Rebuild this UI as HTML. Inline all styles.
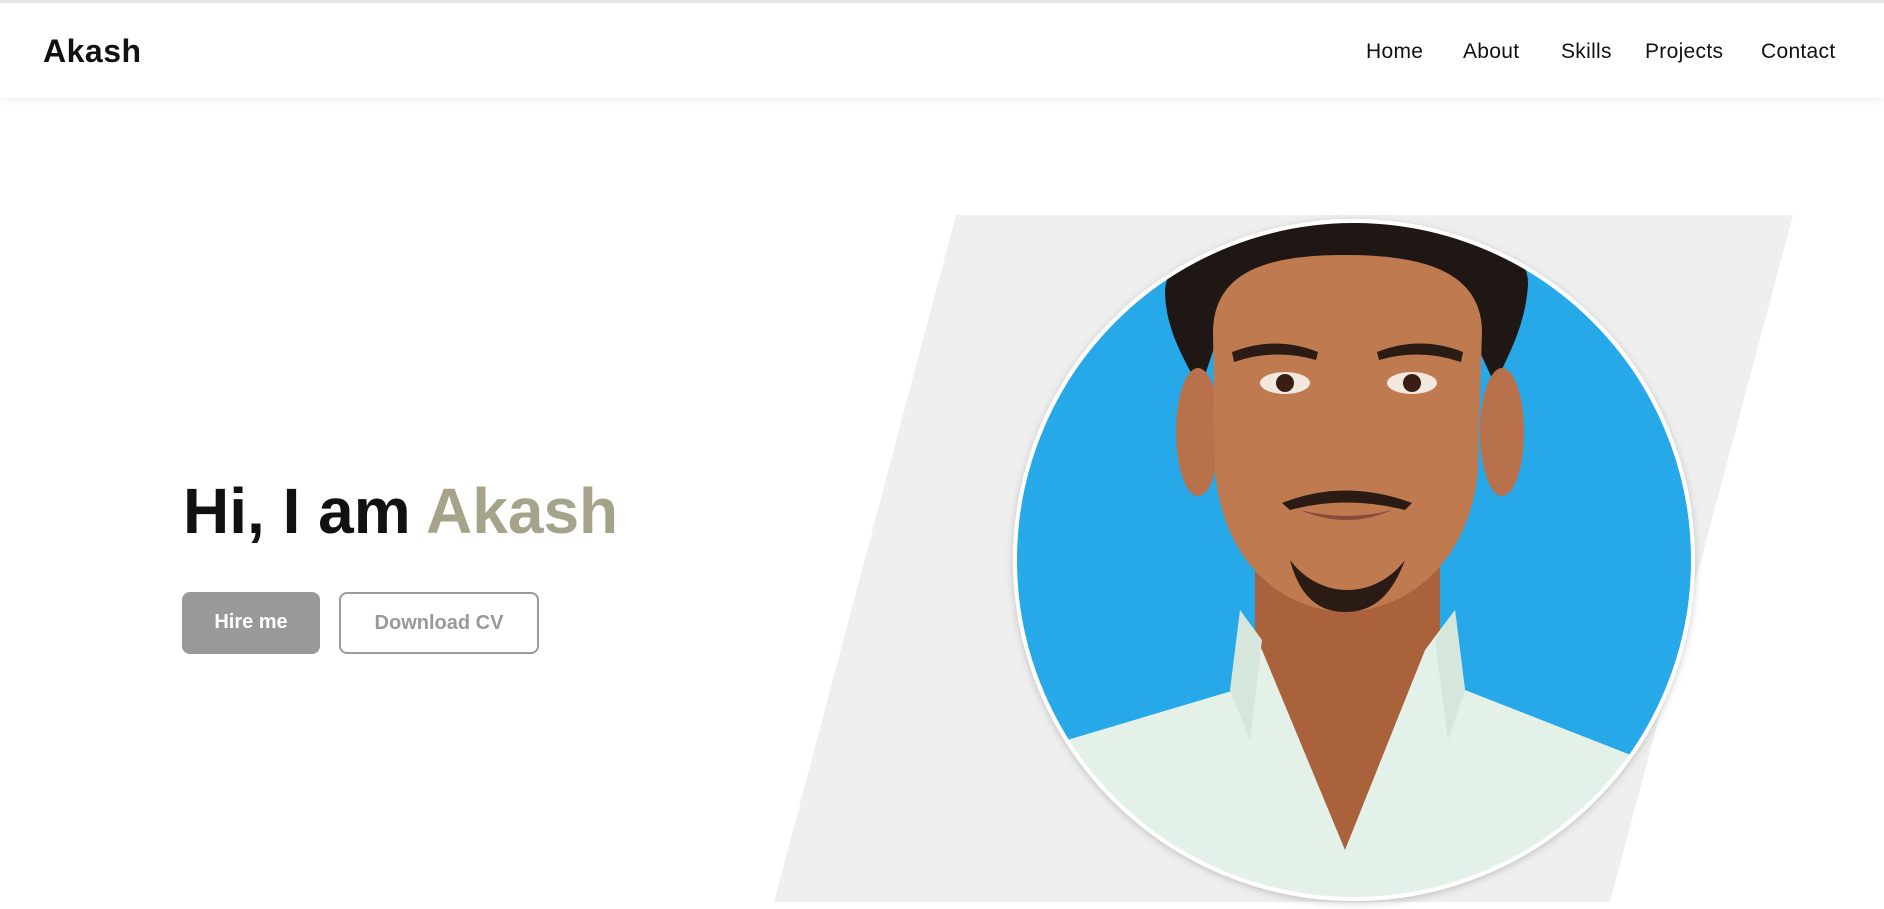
<!DOCTYPE html>
<html><head><meta charset="utf-8"><style>
*{margin:0;padding:0;box-sizing:border-box}
html,body{width:1884px;height:909px;overflow:hidden;background:#fff;font-family:"Liberation Sans",sans-serif}
.top{position:absolute;left:0;top:0;width:1884px;height:3px;background:#e6e6e6}
.nav{position:absolute;left:0;top:3px;width:1884px;height:95px;background:#fff;box-shadow:0 3px 8px rgba(0,0,0,.06);z-index:2}
.logo{position:absolute;left:43px;top:30px;font-size:32px;font-weight:bold;color:#111;letter-spacing:.5px}
.links a{position:absolute;top:37px;font-size:21px;color:#111;text-decoration:none;letter-spacing:.3px}
h1{position:absolute;left:183px;top:474px;font-size:64px;font-weight:bold;color:#111;letter-spacing:0;white-space:nowrap}
h1 span{color:#a5a48a}
.b1{position:absolute;left:182px;top:592px;width:138px;height:62px;background:#999;border-radius:8px;color:#fff;font-weight:bold;font-size:20px;text-align:center;line-height:60px}
.b2{position:absolute;left:339px;top:592px;width:200px;height:62px;border:2px solid #9a9a9a;border-radius:8px;color:#999;font-weight:bold;font-size:20px;text-align:center;line-height:58px}
svg{position:absolute;left:0;top:0}
</style></head><body>
<div class="top"></div>
<div class="nav"><div class="logo">Akash</div>
<div class="links"><a style="left:1366px">Home</a><a style="left:1463px">About</a><a style="left:1561px">Skills</a><a style="left:1645px">Projects</a><a style="left:1761px">Contact</a></div></div>
<svg width="1884" height="909" viewBox="0 0 1884 909">
<defs><clipPath id="c"><circle cx="1354" cy="560" r="338"/></clipPath>
<filter id="s" x="-10%" y="-10%" width="120%" height="120%"><feDropShadow dx="0" dy="2" stdDeviation="4" flood-opacity=".2"/></filter></defs>
<polygon points="956,215 1793,215 1610,902 774,902" fill="#efefef"/>
<circle cx="1354" cy="560" r="341" fill="#fff" filter="url(#s)"/>
<g clip-path="url(#c)">
<rect x="1000" y="200" width="720" height="720" fill="#27a8e8"/>
<path d="M1165,290 C1170,240 1250,215 1345,218 C1440,215 1530,235 1528,285 C1525,330 1505,360 1495,385 L1470,330 C1420,290 1280,290 1220,330 L1200,390 C1185,360 1165,330 1165,290Z" fill="#1e1713"/>
<ellipse cx="1198" cy="432" rx="22" ry="64" fill="#b8714a"/>
<ellipse cx="1502" cy="432" rx="22" ry="64" fill="#b8714a"/>
<rect x="1255" y="520" width="185" height="360" fill="#a9623c"/>
<path d="M1213,330 C1215,270 1270,255 1345,255 C1420,255 1480,270 1482,330 L1478,470 C1470,560 1410,610 1345,612 C1280,610 1222,560 1215,470Z" fill="#c07a50"/>
<path d="M1290,560 C1320,600 1375,600 1405,560 C1390,600 1370,612 1345,612 C1320,612 1300,598 1290,560Z" fill="#2a1c14"/>
<path d="M1232,352 Q1275,335 1318,352 L1316,360 Q1275,348 1234,362Z" fill="#2a1c14"/>
<path d="M1377,352 Q1420,335 1463,352 L1461,362 Q1420,348 1379,360Z" fill="#2a1c14"/>
<ellipse cx="1285" cy="383" rx="25" ry="11" fill="#f2e8e0"/><circle cx="1285" cy="383" r="9" fill="#3a1e14"/>
<ellipse cx="1412" cy="383" rx="25" ry="11" fill="#f2e8e0"/><circle cx="1412" cy="383" r="9" fill="#3a1e14"/>
<path d="M1282,503 Q1345,478 1412,503 L1405,510 Q1345,495 1290,510Z" fill="#2a1c14"/>
<path d="M1300,510 Q1347,530 1392,510 Q1347,522 1300,510Z" fill="#8a4a3a"/>
<path d="M1000,760 L1235,690 L1240,610 L1262,650 L1345,850 L1425,650 L1455,610 L1465,690 L1720,790 L1720,920 L1000,920Z" fill="#e3f1e8"/>
<path d="M1230,690 L1240,610 L1262,640 L1250,740Z M1465,690 L1455,610 L1435,640 L1448,740Z" fill="#d5e6dc"/>
</g>
<circle cx="1354" cy="560" r="339" fill="none" stroke="#fff" stroke-width="4"/>
</svg>
<h1>Hi, I am <span>Akash</span></h1>
<div class="b1">Hire me</div>
<div class="b2">Download CV</div>
</body></html>
